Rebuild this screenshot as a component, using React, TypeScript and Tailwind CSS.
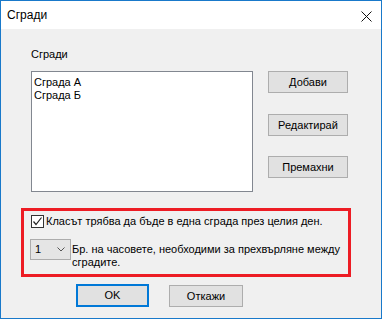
export default function App() {
  const btn =
    "w-[80px] h-[22px] bg-[#e1e1e1] border border-[#adadad] flex items-center justify-center text-[11px] leading-none text-black";
  return (
    <div
      className="w-[385px] h-[320px] bg-white"
      style={{ fontFamily: "'Liberation Sans', Arial, sans-serif" }}
    >
      <div className="w-[382px] h-[319px] border border-[#1979ca] flex flex-col">
        <div className="h-[28px] bg-white flex items-center justify-between pl-[6px] pr-[9px] shrink-0">
          <span className="text-[12px] text-black">Сгради</span>
          <svg width="11" height="11" viewBox="0 0 11 11" className="mt-[2px]">
            <path d="M0.5 0.5 L10.5 10.5 M10.5 0.5 L0.5 10.5" stroke="#111" strokeWidth="1" />
          </svg>
        </div>
        <div className="flex-1 bg-[#f0f0f0] flex flex-col">
          <div className="ml-[30px] mt-[18px] h-[14px] text-[11px] leading-[14px] text-black">Сгради</div>
          <div className="flex mt-[10px]">
            <div className="ml-[30px] w-[222px] h-[121px] bg-white border border-[#828790] pl-[2px] pt-[4px] text-[11px] leading-[13px] text-black">
              <div>Сграда А</div>
              <div>Сграда Б</div>
            </div>
            <div className="ml-[15px] flex flex-col">
              <button className={btn}>Добави</button>
              <button className={`${btn} mt-[21px]`}>Редактирай</button>
              <button className={`${btn} mt-[20px]`}>Премахни</button>
            </div>
          </div>
          <div className="ml-[20px] mt-[16px] w-[330px] h-[69px] border-[3px] border-[#ed1c24] pt-[4px] text-[11px] text-black">
            <div className="flex items-center h-[13px] pl-[7px]">
              <div className="w-[13px] h-[13px] bg-white border border-[#333] flex items-center justify-center shrink-0">
                <svg width="11" height="11" viewBox="0 0 11 11">
                  <path d="M1.5 5.5 L4 8.5 L9.5 1.5" stroke="#222" strokeWidth="1.2" fill="none" />
                </svg>
              </div>
              <span className="ml-[2px] leading-[13px] whitespace-nowrap">
                Класът трябва да бъде в една сграда през целия ден.
              </span>
            </div>
            <div className="flex mt-[11px] pl-[6px]">
              <div className="w-[41px] h-[21px] bg-[#e5e5e5] border border-[#acacac] flex items-center justify-between pl-[4px] pr-[5px] shrink-0">
                <span className="leading-none">1</span>
                <svg width="8" height="5" viewBox="0 0 8 5">
                  <path d="M0.5 0.5 L4 4 L7.5 0.5" stroke="#555" strokeWidth="1" fill="none" />
                </svg>
              </div>
              <div className="ml-[1px] mt-[4px] leading-[13px] whitespace-nowrap">
                Бр. на часовете, необходими за прехвърляне между
                <br />
                сградите.
              </div>
            </div>
          </div>
          <div className="flex mt-[7px] ml-[75px]">
            <button className="w-[73px] h-[23px] bg-[#e1e1e1] border-2 border-[#0078d7] flex items-center justify-center text-[11px] text-black">
              OK
            </button>
            <button className="ml-[20px] w-[74px] h-[22px] mt-[1px] bg-[#e1e1e1] border border-[#adadad] flex items-center justify-center text-[11px] text-black">
              Откажи
            </button>
          </div>
        </div>
      </div>
    </div>
  );
}
